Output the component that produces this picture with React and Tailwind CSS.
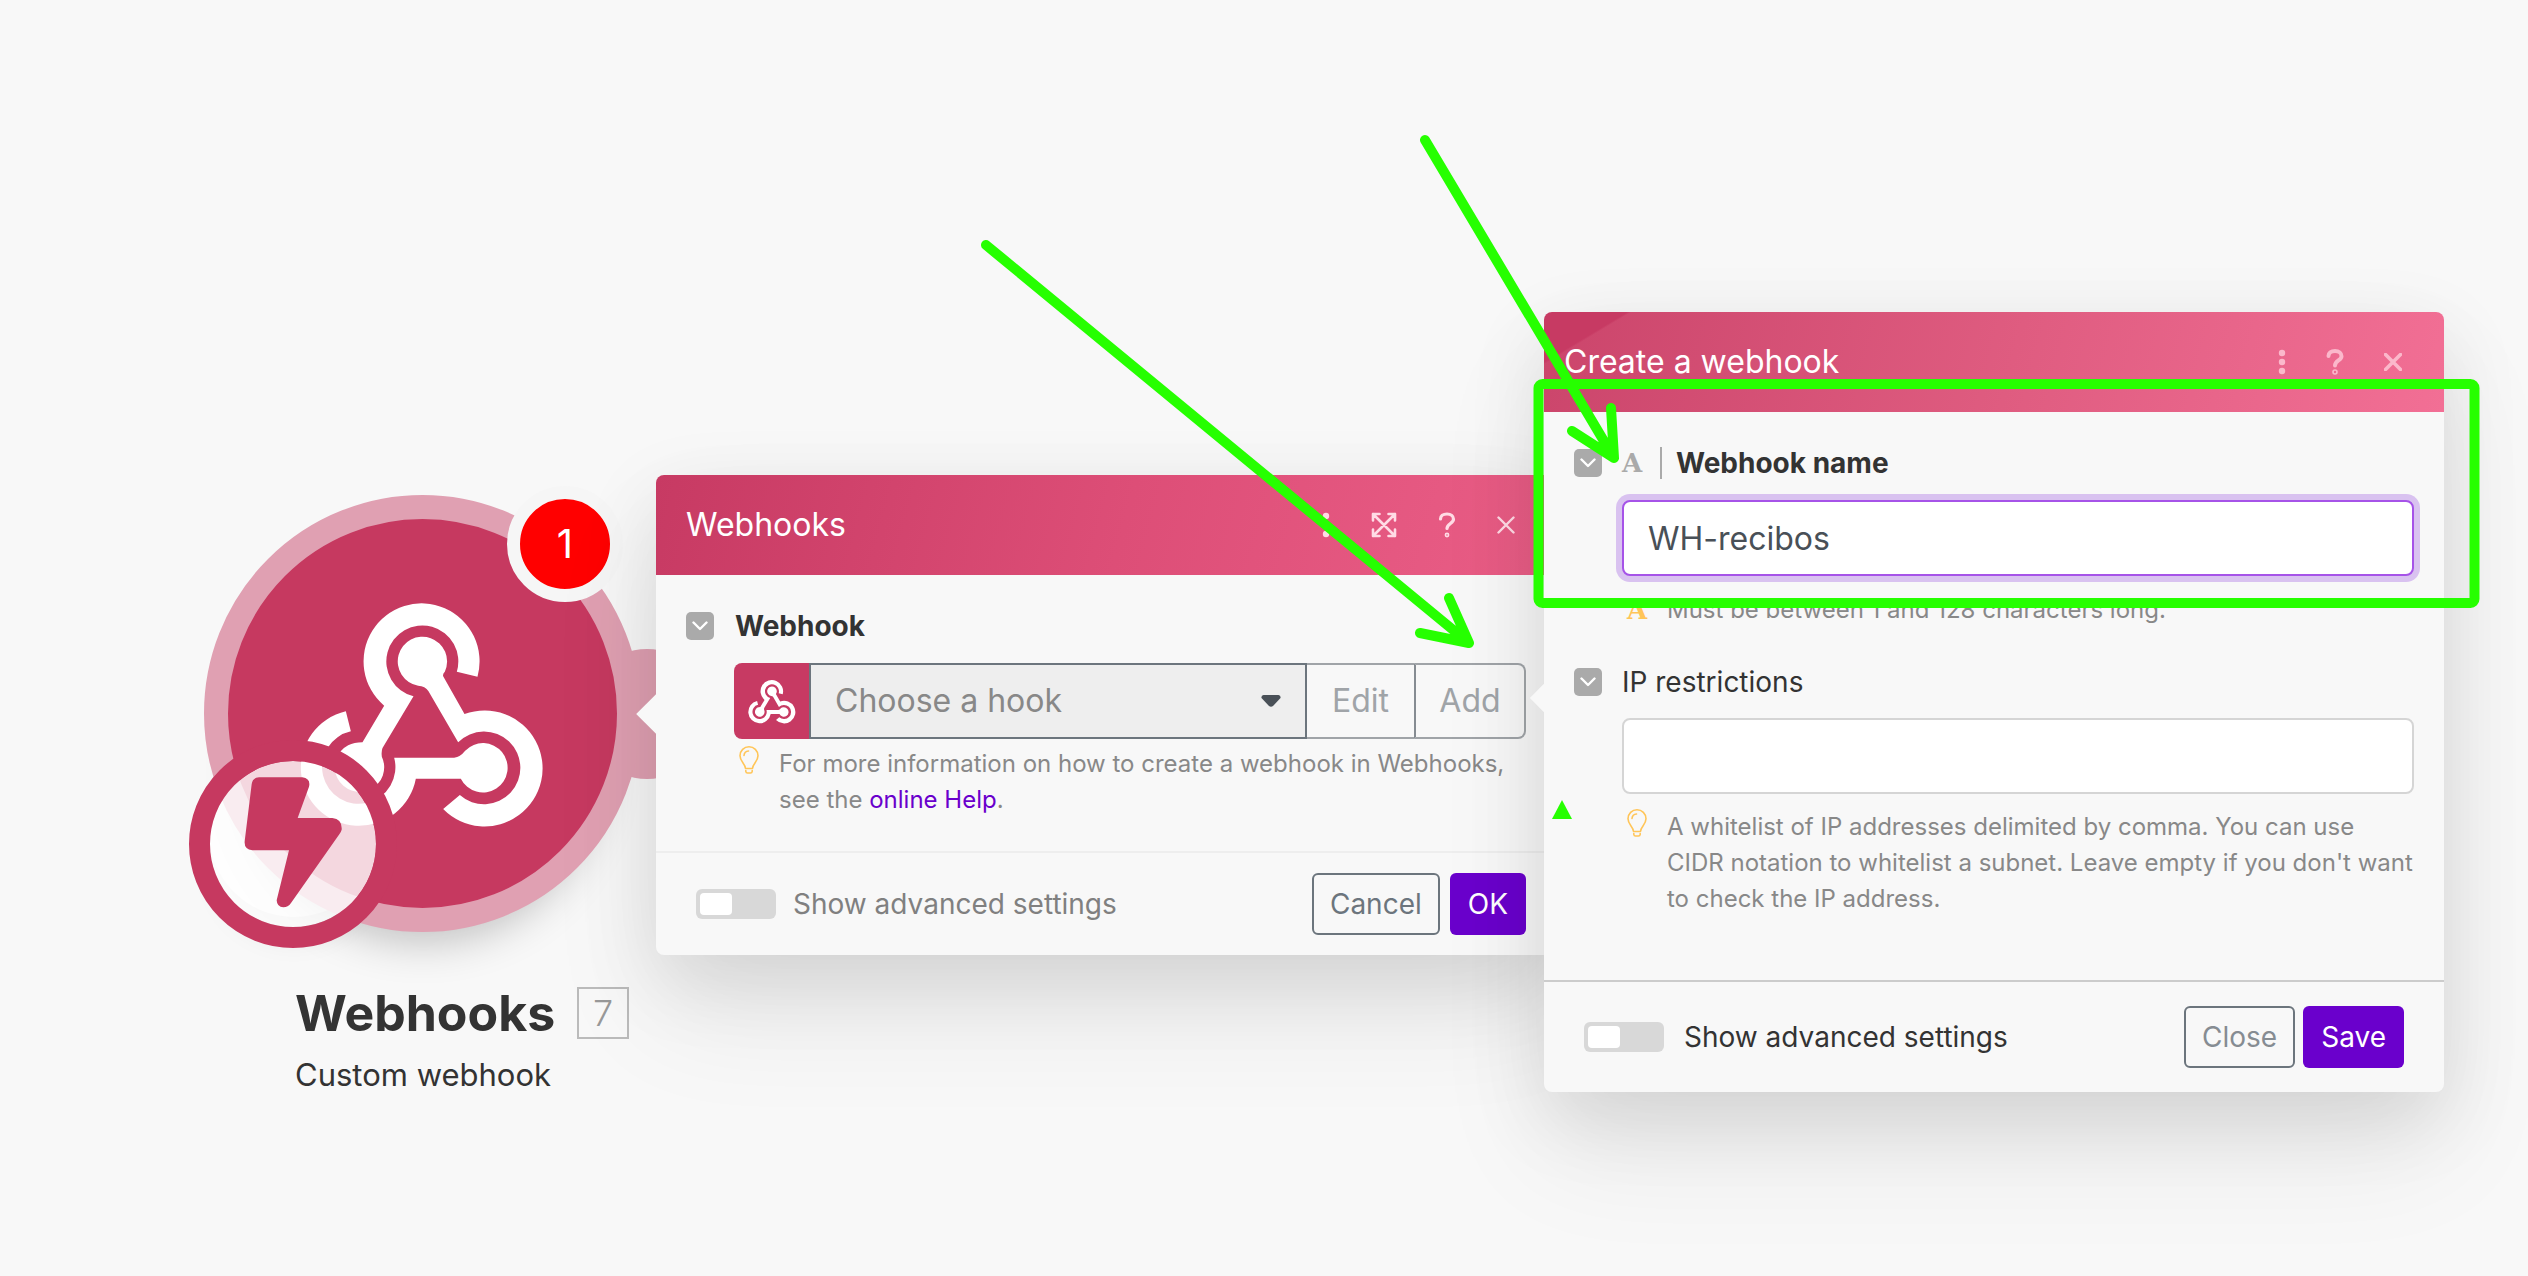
import React, { useState } from 'react';

function WebhookIcon({ className }) {
  return (
    <svg viewBox="420 385 740 690" className={className} fill="currentColor" aria-hidden="true">
      <path d="M955 618 L893 603 A108 108 0 1 0 763 677 L670 832 Q666 842 668 858 A74 74 0 1 1 567 824 Q585 815 610 815 L675 705 A174 174 0 1 1 955 618Z" />
      <path d="M560 722 L575 782 A110 110 0 1 0 705 861 L885 861 Q903 859 918 840 A74 74 0 1 1 905 924 L770 924 A174 174 0 1 1 560 722Z" />
      <path d="M852 1015 L902 973 A109 109 0 1 0 897 815 L808 662 Q798 646 777 645 A74 74 0 1 1 857 603 Q850 610 852 617 L916 730 A174 174 0 1 1 852 1015Z" />
    </svg>
  );
}

function Bulb() {
  return (
    <svg viewBox="0 0 20 28" className="h-7 w-5 shrink-0" fill="none" stroke="#ffc558" strokeWidth="1.6" strokeLinecap="round" strokeLinejoin="round" aria-hidden="true">
      <path d="M6.500 22.500 C6.300 17.500 1 15.500 1 9.800 A9 9 0 0 1 19 9.800 C19 15.500 13.700 17.500 13.500 22.500Z" />
      <path d="M5 9.500 A5 5 0 0 1 9.500 5" />
      <path d="M6.800 24.500 V25.500 Q7 27 8.500 27 H11.500 Q13 27 13.200 25.500 V24.500" />
    </svg>
  );
}

function Collapse({ label }) {
  return (
    <button aria-label={label} className="flex size-7 shrink-0 items-center justify-center rounded-[5px] bg-[#aaa] text-white">
      <svg viewBox="0 0 16 10" className="h-[10px] w-4" fill="none" stroke="currentColor" strokeWidth="2.4" strokeLinecap="round" strokeLinejoin="round">
        <path d="M1.500 1.500 L8 8 L14.500 1.500" />
      </svg>
    </button>
  );
}

function DotsIcon() {
  return (
    <svg viewBox="0 0 8 26" className="h-[26px] w-2" fill="currentColor">
      <circle cx="4" cy="4" r="3.200" />
      <circle cx="4" cy="13" r="3.200" />
      <circle cx="4" cy="22" r="3.200" />
    </svg>
  );
}

function ExpandIcon() {
  return (
    <svg viewBox="0 0 26 26" className="size-[26px]" fill="none" stroke="currentColor" strokeWidth="2.600" strokeLinecap="round" strokeLinejoin="round">
      <path d="M2 2 L24 24 M24 2 L2 24 M2 8.500 V2 H8.500 M17.500 2 H24 V8.500 M24 17.500 V24 H17.500 M8.500 24 H2 V17.500" />
    </svg>
  );
}

function QuestionIcon({ bold }) {
  return (
    <svg viewBox="0 0 18 26" className="h-[26px] w-[18px]" fill="none" stroke="currentColor" strokeWidth={bold ? 4 : 3.2} strokeLinecap="round" strokeLinejoin="round">
      <path d="M2.500 7 C2.500 4 5 2 9 2 C13 2 15.500 4.200 15.500 7.200 C15.500 11.500 9 11.500 9 16.500" />
      <circle cx="9" cy="23" r="0.800" />
    </svg>
  );
}

function CloseIcon({ bold }) {
  return (
    <svg viewBox="0 0 18 18" className="size-[18px]" fill="none" stroke="currentColor" strokeWidth={bold ? 3.6 : 2.4} strokeLinecap="round">
      <path d="M1.500 1.500 L16.500 16.500 M16.500 1.500 L1.500 16.500" />
    </svg>
  );
}

function Toggle({ id, className }) {
  const [on, setOn] = useState(false);
  return (
    <label htmlFor={id} className={`flex items-center text-[28px] leading-9 ${className}`}>
      <input
        id={id}
        type="checkbox"
        checked={on}
        onChange={(e) => setOn(e.target.checked)}
        className="h-[30px] w-20 appearance-none rounded-md bg-[#d8d8d8] p-1 before:block before:h-[22px] before:w-8 before:rounded before:bg-white checked:bg-[#6a00cc] checked:before:ml-10"
      />
      Show advanced settings
    </label>
  );
}

function Module() {
  return (
    <div className="absolute left-[189px] top-[495px]">
      <div className="absolute left-[35px] top-[20px] size-[398px] rounded-full shadow-[0_52px_44px_-24px_rgba(0,0,0,0.24)]" />
      <div className="absolute left-[20px] top-[252px] size-[170px] rounded-full shadow-[0_30px_30px_-10px_rgba(0,0,0,0.1)]" />
      {/* connector */}
      <div className="absolute left-[393px] top-[154px] size-[130px] rounded-full bg-[#e0a0b2]" />
      <div className="absolute left-[15px] top-0 flex size-[437px] items-center justify-center rounded-full border-[24px] border-[#e0a0b2] bg-[#c63960] text-white">
        <WebhookIcon className="h-[230px] w-[247px]" />
      </div>
      <div className="absolute left-[318px] top-[-9px] flex size-[116px] items-center justify-center rounded-full border-[13px] border-[#f6f6f6] bg-[#f00] text-[40px] text-white">
        1
      </div>
      {/* instant trigger */}
      <div className="absolute left-0 top-[245px] size-[208px] rounded-full border-[21px] border-[#c63960] bg-white/80 bg-clip-padding">
        <svg viewBox="148 872 498 498" className="size-full" fill="#c63960">
          <path d="M295 921 H425 Q451 925 445 949 L411 1043 H515 Q545 1046 543 1078 Q541 1085 536 1092 L391 1298 Q382 1311 368 1311 Q349 1310 348 1290 L385 1140 H275 Q250 1137 252 1113 L273 942 Q275 922 295 921Z" />
        </svg>
      </div>
      <div className="ml-[106px] mt-[488px] whitespace-nowrap text-[#333]">
        <div className="flex items-center gap-[22px]">
          <h1 className="text-[50px] leading-[60px] font-bold">Webhooks</h1>
          <span className="flex size-[52px] items-center justify-center border-2 border-[#bbb] text-[36px] font-light text-[#999]">7</span>
        </div>
        <p className="mt-3 text-[31px] leading-10">Custom webhook</p>
      </div>
    </div>
  );
}

function HookWindow() {
  return (
    <section className="absolute left-[656px] top-[475px] w-[900px] rounded-lg bg-[#f8f8f8] shadow-[0_25px_80px_rgba(0,0,0,0.10),0_60px_120px_rgba(0,0,0,0.07)]">
      <div className="absolute left-[-14px] top-[225px] size-7 rotate-45 bg-[#f8f8f8]" />
      <header className="relative flex h-[100px] items-center rounded-t-lg bg-[linear-gradient(105deg,#c73a63,#dd4e77_52%,#ea5e87)] pl-[30px] pr-[41px] text-[#ffdbe5]">
        <h2 className="flex-1 text-[32px]">
          <span className="text-white">Webhooks</span>
        </h2>
        <div className="flex items-center gap-[41px]">
          <button aria-label="More"><DotsIcon /></button>
          <button aria-label="Expand"><ExpandIcon /></button>
          <button aria-label="Help"><QuestionIcon /></button>
          <button aria-label="Close"><CloseIcon /></button>
        </div>
      </header>
      <div className="relative px-[30px] pb-[24px] pt-[33px]">
        <div className="flex items-center gap-[21px]">
          <Collapse label="Toggle webhook" />
          <label htmlFor="hook" className="text-[28px] leading-9 font-bold text-[#333]">Webhook</label>
        </div>
        <div className="ml-12 mt-[19px] flex h-[76px] text-[32px]">
          <span className="flex w-[75px] items-center justify-center rounded-l-lg bg-[#c73a63] text-white">
            <WebhookIcon className="h-[45px] w-12" />
          </span>
          <div className="relative flex-1">
            <select id="hook" className="h-full w-full appearance-none border-2 border-[#6c757d] bg-[#eee] pl-6 text-[#888]">
              <option>Choose a hook</option>
            </select>
            <svg viewBox="0 0 20 12" className="pointer-events-none absolute right-[26px] top-8 h-3 w-5" fill="#495057">
              <path d="M2.500 0 H17.500 Q20 0.500 19.500 3 L12 11 Q10 12.500 8 11 L0.500 3 Q0 0.500 2.500 0Z" />
            </svg>
          </div>
          <button className="w-[107px] border-y-2 border-[#a0a4a8] text-[#a0a4a8]">Edit</button>
          <button className="w-[112px] rounded-r-lg border-2 border-[#a0a4a8] border-l-[#868c92] text-[#a0a4a8]">Add</button>
        </div>
        <div className="ml-[53px] mt-[7px] flex gap-5 text-[24px] leading-9 text-[#888]">
          <Bulb />
          <p>
            For more information on how to create a webhook in Webhooks,
            <br />
            see the <a href="#help" className="text-[#6a00cc]">online Help</a>.
          </p>
        </div>
      </div>
      <footer className="mt-[9px] flex h-[104px] items-center border-t-2 border-[#eee] pl-10 pr-[30px] text-[28px]">
        <Toggle id="hook-advanced" className="flex-1 gap-[17px] text-[#808080]" />
        <button className="h-[62px] rounded-md border-2 border-[#6c757d] px-4 text-[#6c757d]">Cancel</button>
        <button className="ml-[10px] h-[62px] rounded-md bg-[#6a00cc] px-[18px] text-white">OK</button>
      </footer>
    </section>
  );
}

function CreateWindow() {
  const [name, setName] = useState('WH-recibos');
  return (
    <section className="absolute left-[1544px] top-[312px] w-[900px] rounded-lg bg-[#f8f8f8] shadow-[0_25px_80px_rgba(0,0,0,0.10),0_60px_120px_rgba(0,0,0,0.07)]">
      <div className="absolute left-[-10px] top-[376px] size-5 rotate-45 bg-[#f8f8f8]" />
      <header className="relative flex h-[100px] items-center rounded-t-lg bg-[linear-gradient(149deg,#c73a63_0px,#c73a63_43px,transparent_45px),linear-gradient(105deg,#cb456b,#df5c80_52%,#f26f95)] pl-5 pr-[42px] text-[#fbb8cb]">
        <h2 className="flex-1 text-[32px]">
          <span className="text-white">Create a webhook</span>
        </h2>
        <div className="flex items-center gap-[40px]">
          <button aria-label="More"><DotsIcon /></button>
          <button aria-label="Help"><QuestionIcon bold /></button>
          <button aria-label="Close"><CloseIcon bold /></button>
        </div>
      </header>
      <div className="px-[30px] pb-[63px] pt-[33px]">
        <div className="flex items-center">
          <Collapse label="Toggle webhook name" />
          <span aria-hidden="true" className="ml-5 w-6 font-['DejaVu_Serif'] text-[26px] leading-9 font-bold text-[#aaa]">A</span>
          <span className="ml-[14px] h-8 w-[2px] bg-[#aaa]" />
          <label htmlFor="name" className="ml-[14px] text-[28px] leading-9 font-bold text-[#333]">Webhook name</label>
        </div>
        <input
          id="name"
          value={name}
          onChange={(e) => setName(e.target.value)}
          className="ml-12 mt-[19px] block h-[76px] w-[792px] rounded-lg border-2 border-[#a653e8] bg-white px-6 text-[32px] text-[#495057] outline-none ring-6 ring-[#d9c2f0]"
        />
        <div className="ml-[53px] mt-4 flex items-center gap-[18px] text-[24px] leading-9 text-[#888]">
          <span aria-hidden="true" className="w-[22px] font-['DejaVu_Serif'] text-[26px] font-bold text-[#ffc558]">A</span>
          <p>Must be between 1 and 128 characters long.</p>
        </div>
        <div className="mt-9 flex items-center gap-5">
          <Collapse label="Toggle IP restrictions" />
          <label htmlFor="ip" className="text-[28px] leading-9 text-[#333]">IP restrictions</label>
        </div>
        <input id="ip" className="ml-12 mt-[18px] block h-[76px] w-[792px] rounded-lg border-2 border-[#d5d5d5] bg-white px-6 text-[32px] text-[#495057]" />
        <div className="ml-[53px] mt-[15px] flex gap-5 text-[24px] leading-9 text-[#888]">
          <Bulb />
          <p>
            A whitelist of IP addresses delimited by comma. You can use
            <br />
            CIDR notation to whitelist a subnet. Leave empty if you don't want
            <br />
            to check the IP address.
          </p>
        </div>
      </div>
      <footer className="flex h-[112px] items-center border-t-2 border-[#ccc] pl-10 pr-10 text-[28px]">
        <Toggle id="create-advanced" className="flex-1 gap-5 text-[#333]" />
        <button className="h-[62px] rounded-md border-2 border-[#6c757d] px-4 text-[#868c92]">Close</button>
        <button className="ml-2 h-[62px] rounded-md bg-[#6a00cc] px-[18px] text-white">Save</button>
      </footer>
    </section>
  );
}

function Annotations() {
  return (
    <svg className="pointer-events-none absolute inset-0 h-full w-full" fill="none" stroke="#26ff00" strokeWidth="10" strokeLinecap="round" strokeLinejoin="round">
      <path d="M986 245 L1469 643 M1449 598 L1469 643 L1420 633" />
      <path d="M1425 140 L1614 458 M1611 408 L1614 458 L1572 431" />
      <rect x="1538.500" y="384" width="936" height="219" rx="4" />
      <path d="M1562 800 L1572 819 H1552Z" fill="#26ff00" stroke="none" />
    </svg>
  );
}

export default function App() {
  return (
    <main className="relative min-h-screen w-full overflow-hidden bg-[#f8f8f8] font-['Inter','Liberation_Sans',sans-serif]">
      <Module />
      <HookWindow />
      <CreateWindow />
      <Annotations />
    </main>
  );
}
